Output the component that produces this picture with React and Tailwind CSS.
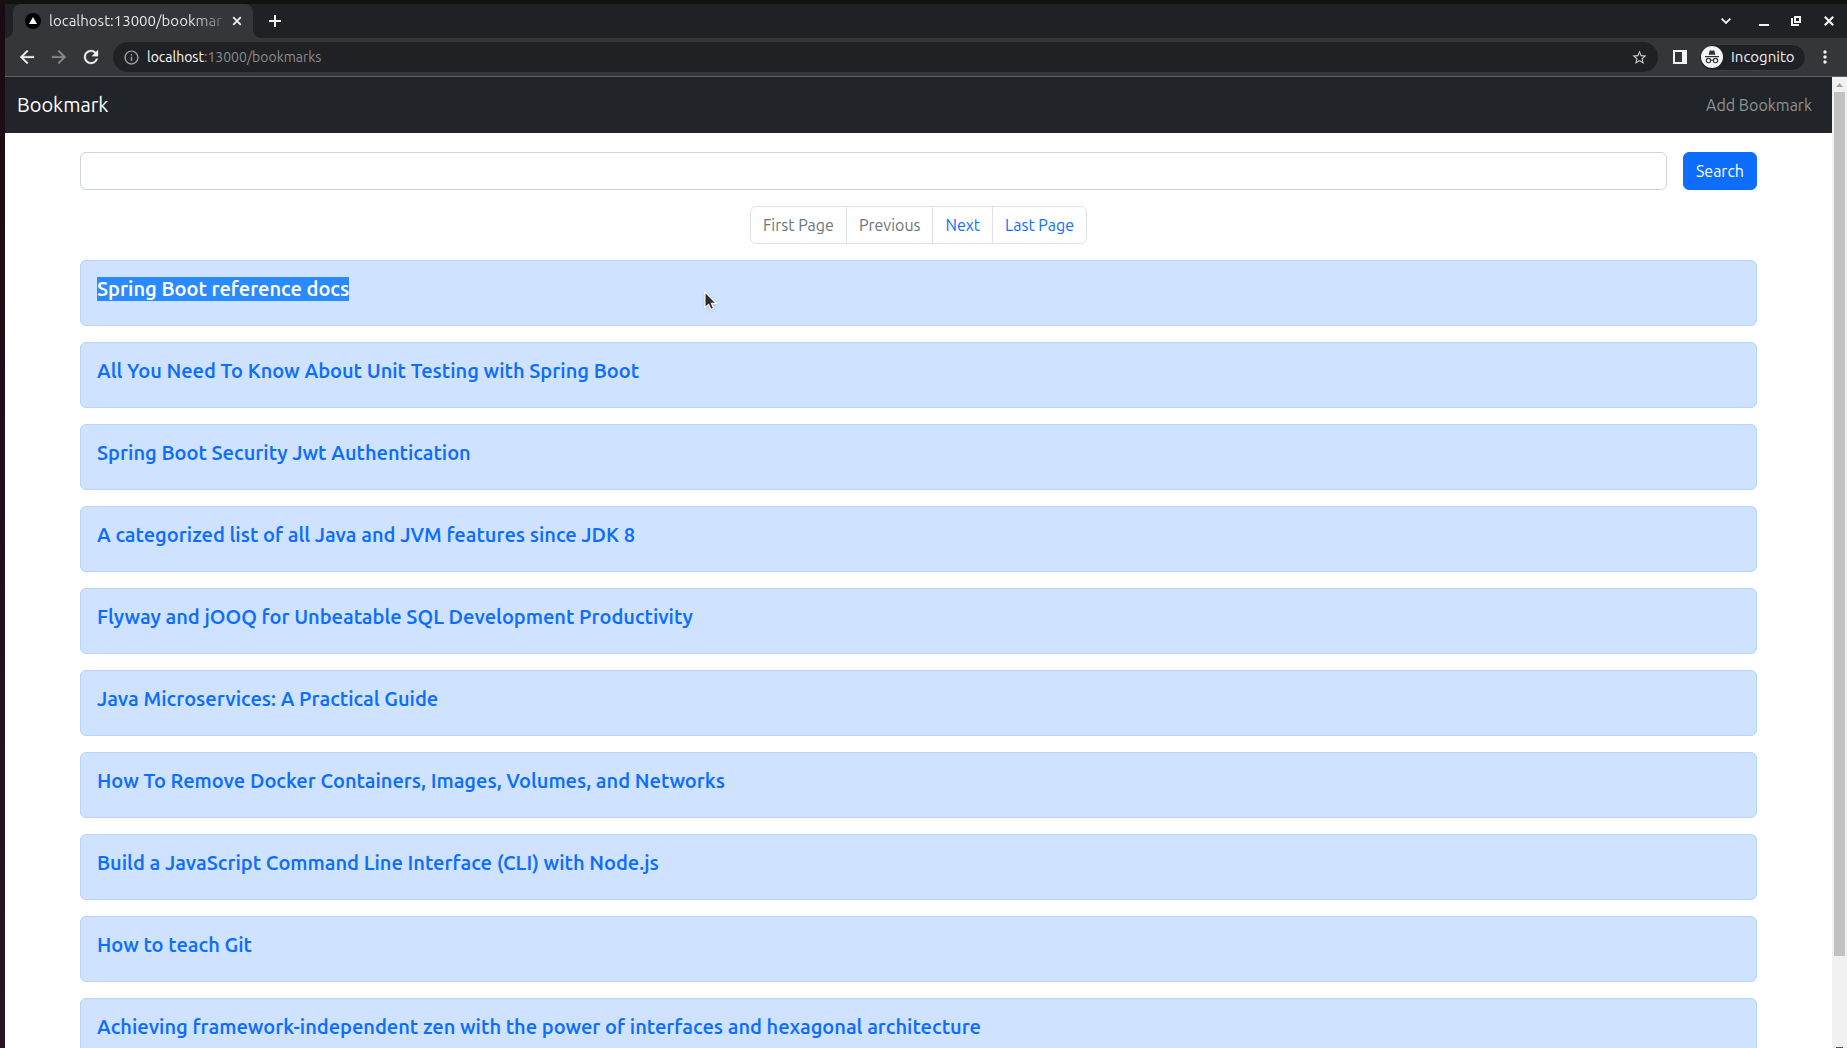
import React from "react";
import { MdInfoOutline, MdStarBorder, MdMoreVert } from "react-icons/md";

const bookmarks = [
  { title: "Spring Boot reference docs", selected: true },
  { title: "All You Need To Know About Unit Testing with Spring Boot" },
  { title: "Spring Boot Security Jwt Authentication" },
  { title: "A categorized list of all Java and JVM features since JDK 8" },
  { title: "Flyway and jOOQ for Unbeatable SQL Development Productivity" },
  { title: "Java Microservices: A Practical Guide" },
  { title: "How To Remove Docker Containers, Images, Volumes, and Networks" },
  { title: "Build a JavaScript Command Line Interface (CLI) with Node.js" },
  { title: "How to teach Git" },
  { title: "Achieving framework-independent zen with the power of interfaces and hexagonal architecture" },
];

const pages = [
  { label: "First Page", disabled: true },
  { label: "Previous", disabled: true },
  { label: "Next" },
  { label: "Last Page" },
];

function IconButton({ label, children, className = "" }) {
  return (
    <button
      type="button"
      aria-label={label}
      className={`flex h-8 w-8 shrink-0 items-center justify-center ${className}`}
    >
      {children}
    </button>
  );
}

function NavGlyph({ d }) {
  return (
    <svg viewBox="4 4 16 16" className="h-3.5 w-3.5 overflow-visible" fill="currentColor" stroke="currentColor" strokeWidth="0.3">
      <path d={d} />
    </svg>
  );
}

function TabStrip() {
  return (
    <div className="flex h-[34px] bg-[#202124] text-[#f1f3f4]">
      <div className="w-2 bg-[#35363a]">
        <div className="h-full rounded-br-lg bg-[#202124]" />
      </div>
      <div className="flex w-60 items-center rounded-t-lg bg-[#35363a] pr-1 pl-3">
        <svg viewBox="0 0 16 16" className="h-4 w-4 shrink-0" aria-hidden="true">
          <circle cx="8" cy="8" r="8" fill="#000" />
          <path d="M8 4 12 11H4Z" fill="#fff" />
        </svg>
        <span className="ml-2 flex-1 bg-linear-to-r from-[#f1f3f4] from-80% to-[#f1f3f4]/20 bg-clip-text text-[15px] whitespace-nowrap text-transparent">
          localhost:13000/bookmar
        </span>
        <button type="button" aria-label="Close tab" className="flex h-6 w-6 items-center justify-center">
          <svg viewBox="0 0 10 10" className="h-[10px] w-[10px]" fill="none" stroke="currentColor" strokeWidth="1.7">
            <path d="M1.2 1.2 8.8 8.8M8.8 1.2 1.2 8.8" />
          </svg>
        </button>
      </div>
      <div className="w-2 bg-[#35363a]">
        <div className="h-full rounded-bl-lg bg-[#202124]" />
      </div>
      <div className="flex items-center">
        <button type="button" aria-label="New tab" className="flex h-7 w-7 items-center justify-center">
          <svg viewBox="0 0 12 12" className="h-3 w-3" fill="none" stroke="currentColor" strokeWidth="2">
            <path d="M6 0V12M0 6H12" />
          </svg>
        </button>
      </div>
      <div className="ml-auto flex items-center pr-0.5">
        <IconButton label="Search tabs" className="mr-1.5">
          <svg viewBox="0 0 10 6" className="h-1.5 w-[10px]" fill="none" stroke="currentColor" strokeWidth="1.8">
            <path d="M.6.6 5 5 9.4.6" />
          </svg>
        </IconButton>
        <IconButton label="Minimize">
          <svg viewBox="0 0 10 10" className="h-[10px] w-[10px]" fill="currentColor">
            <path d="M0 8H10V10H0Z" />
          </svg>
        </IconButton>
        <IconButton label="Restore" className="mr-px">
          <svg viewBox="0 0 10 10" className="h-[10px] w-[10px]" fill="currentColor" fillRule="evenodd">
            <path d="M3 0H10V7H3ZM5 2V5H8V2Z" />
            <path d="M0 2H2V8H8V10H0Z" />
          </svg>
        </IconButton>
        <IconButton label="Close window">
          <svg viewBox="0 0 10 10" className="h-[10px] w-[10px]" fill="none" stroke="currentColor" strokeWidth="2.2">
            <path d="M.8.8 9.2 9.2M9.2.8.8 9.2" />
          </svg>
        </IconButton>
      </div>
    </div>
  );
}

function Toolbar() {
  return (
    <div className="flex h-[39px] items-center border-b border-[#606165] bg-[#35363a] px-1.5 text-[#f1f3f4]">
      <IconButton label="Back">
        <NavGlyph d="M20 11H7.83l5.59-5.59L12 4l-8 8 8 8 1.41-1.41L7.83 13H20v-2z" />
      </IconButton>
      <IconButton label="Forward" className="text-[#88898c]">
        <NavGlyph d="M12 4l-1.41 1.41L16.17 11H4v2h12.17l-5.58 5.59L12 20l8-8z" />
      </IconButton>
      <IconButton label="Reload">
        <NavGlyph d="M17.65 6.35A7.958 7.958 0 0 0 12 4c-4.42 0-7.99 3.58-7.99 8s3.57 8 7.99 8c3.73 0 6.84-2.55 7.73-6h-2.08A5.99 5.99 0 0 1 12 18c-3.31 0-6-2.69-6-6s2.69-6 6-6c1.66 0 3.14.69 4.22 1.78L13 11h7V4l-2.35 2.35z" />
      </IconButton>
      <div className="ml-1.5 flex h-[30px] flex-1 items-center rounded-full bg-[#202124] px-2.5">
        <MdInfoOutline size={17} className="shrink-0 text-[#9aa0a6]" />
        <a href="#url" className="ml-[7px] flex-1 text-sm text-[#8b8c8f]">
          <span className="text-white">localhost</span>:13000/bookmarks
        </a>
        <button type="button" aria-label="Bookmark this tab" className="text-[#c4c7c9]">
          <MdStarBorder size={17} />
        </button>
      </div>
      <IconButton label="Side panel" className="ml-1.5">
        <svg viewBox="0 0 14 14" className="h-3.5 w-3.5" fill="currentColor" fillRule="evenodd">
          <path d="M0 0H14V14H0ZM2 2V12H9V2Z" />
        </svg>
      </IconButton>
      <button
        type="button"
        className="mx-[3px] flex h-[27px] w-[107px] items-center gap-2 rounded-full border border-[#3c3d41] bg-[#202124] pl-px text-[15px]"
      >
        <svg viewBox="0 0 22 22" className="h-[22px] w-[22px] shrink-0" aria-hidden="true">
          <circle cx="11" cy="11" r="11" fill="#f1f3f4" />
          <path d="M7.6 8.8 8.6 5Q8.8 4.2 9.6 4.4L11 4.8 12.4 4.4Q13.2 4.2 13.4 5L14.4 8.8Z" fill="#303134" />
          <path d="M4 10H18V11.2H4Z" fill="#303134" />
          <g fill="none" stroke="#303134" strokeWidth="1.1">
            <circle cx="7.5" cy="14.6" r="2.2" />
            <circle cx="14.5" cy="14.6" r="2.2" />
            <path d="M9.7 14.4Q11 13.6 12.3 14.4" />
          </g>
        </svg>
        Incognito
      </button>
      <IconButton label="Menu">
        <MdMoreVert size={20} />
      </IconButton>
    </div>
  );
}

function Scrollbar() {
  return (
    <div className="flex w-[15px] shrink-0 flex-col items-center bg-[#f1f1f1]" aria-hidden="true">
      <div className="flex h-[15px] shrink-0 items-center">
        <svg viewBox="0 0 7 4" className="h-1 w-[7px]" fill="#a3a3a3">
          <path d="M3.5 0 7 4H0Z" />
        </svg>
      </div>
      <div className="w-[11px] flex-[864] bg-[#c1c1c1]" />
      <div className="flex-[91]" />
      <div className="h-px w-[7px] bg-[#505050]" />
    </div>
  );
}

export default function App() {
  return (
    <div className="flex h-screen flex-col overflow-hidden border-t-4 border-[#12130f] font-['Ubuntu','Open_Sans',sans-serif]">
      <div className="flex min-h-0 flex-1">
        <div className="w-[5px] shrink-0 bg-linear-to-b from-[#180c12] to-[#261620]" />
        <div className="flex min-w-0 flex-1 flex-col">
          <TabStrip />
          <Toolbar />
          <div className="flex min-h-0 flex-1 bg-white">
            <div className="min-w-0 flex-1 overflow-hidden">
              <nav className="flex h-14 items-center justify-between bg-[#212529] pr-5 pl-3">
                <a href="#home" className="text-xl text-white">
                  Bookmark
                </a>
                <a href="#add" className="text-base text-[#909294]">
                  Add Bookmark
                </a>
              </nav>
              <main className="flex flex-col gap-4 px-[75px] pt-[19px]">
                <form className="flex gap-4" onSubmit={(e) => e.preventDefault()}>
                  <input
                    type="search"
                    aria-label="Search bookmarks"
                    className="h-[38px] min-w-0 flex-1 rounded-md border border-[#ced4da] bg-white px-3 text-base outline-none"
                  />
                  <button
                    type="submit"
                    className="h-[38px] rounded-md border border-[#0d6efd] bg-[#0d6efd] px-3 text-base text-white"
                  >
                    Search
                  </button>
                </form>
                <div className="flex justify-center">
                  <ul className="flex h-[38px] divide-x divide-[#dee2e6] rounded-md border border-[#dee2e6]">
                    {pages.map((page) => (
                      <li key={page.label} className="flex">
                        <button
                          type="button"
                          disabled={page.disabled}
                          className="px-3 text-base text-[#0d6efd] disabled:text-[#6c757d]"
                        >
                          {page.label}
                        </button>
                      </li>
                    ))}
                  </ul>
                </div>
                <ul className="flex flex-col gap-4">
                  {bookmarks.map((bookmark) => (
                    <li
                      key={bookmark.title}
                      className="rounded-md border border-[#b6d4fe] bg-[#cfe2ff] px-4 pt-4 pb-6"
                    >
                      <h5 className="flex font-['Ubuntu_Sans','Ubuntu','Open_Sans',sans-serif] text-xl leading-6 font-semibold text-[#0d6efd]">
                        <a href="#bookmark" className={bookmark.selected ? "bg-[#2a8aff] text-white" : ""}>
                          {bookmark.title}
                        </a>
                      </h5>
                    </li>
                  ))}
                </ul>
              </main>
            </div>
            <Scrollbar />
          </div>
        </div>
      </div>
      <svg
        viewBox="0 0 14 20"
        className="pointer-events-none absolute top-[291px] left-[704px] h-5 w-3.5 drop-shadow"
        aria-hidden="true"
      >
        <path d="M1 1V16.5L4.6 13.4 7 18.4 9.6 17.2 7.4 12.4H12.2Z" fill="#2b2b2b" stroke="#fff" strokeWidth="1.1" />
      </svg>
    </div>
  );
}
